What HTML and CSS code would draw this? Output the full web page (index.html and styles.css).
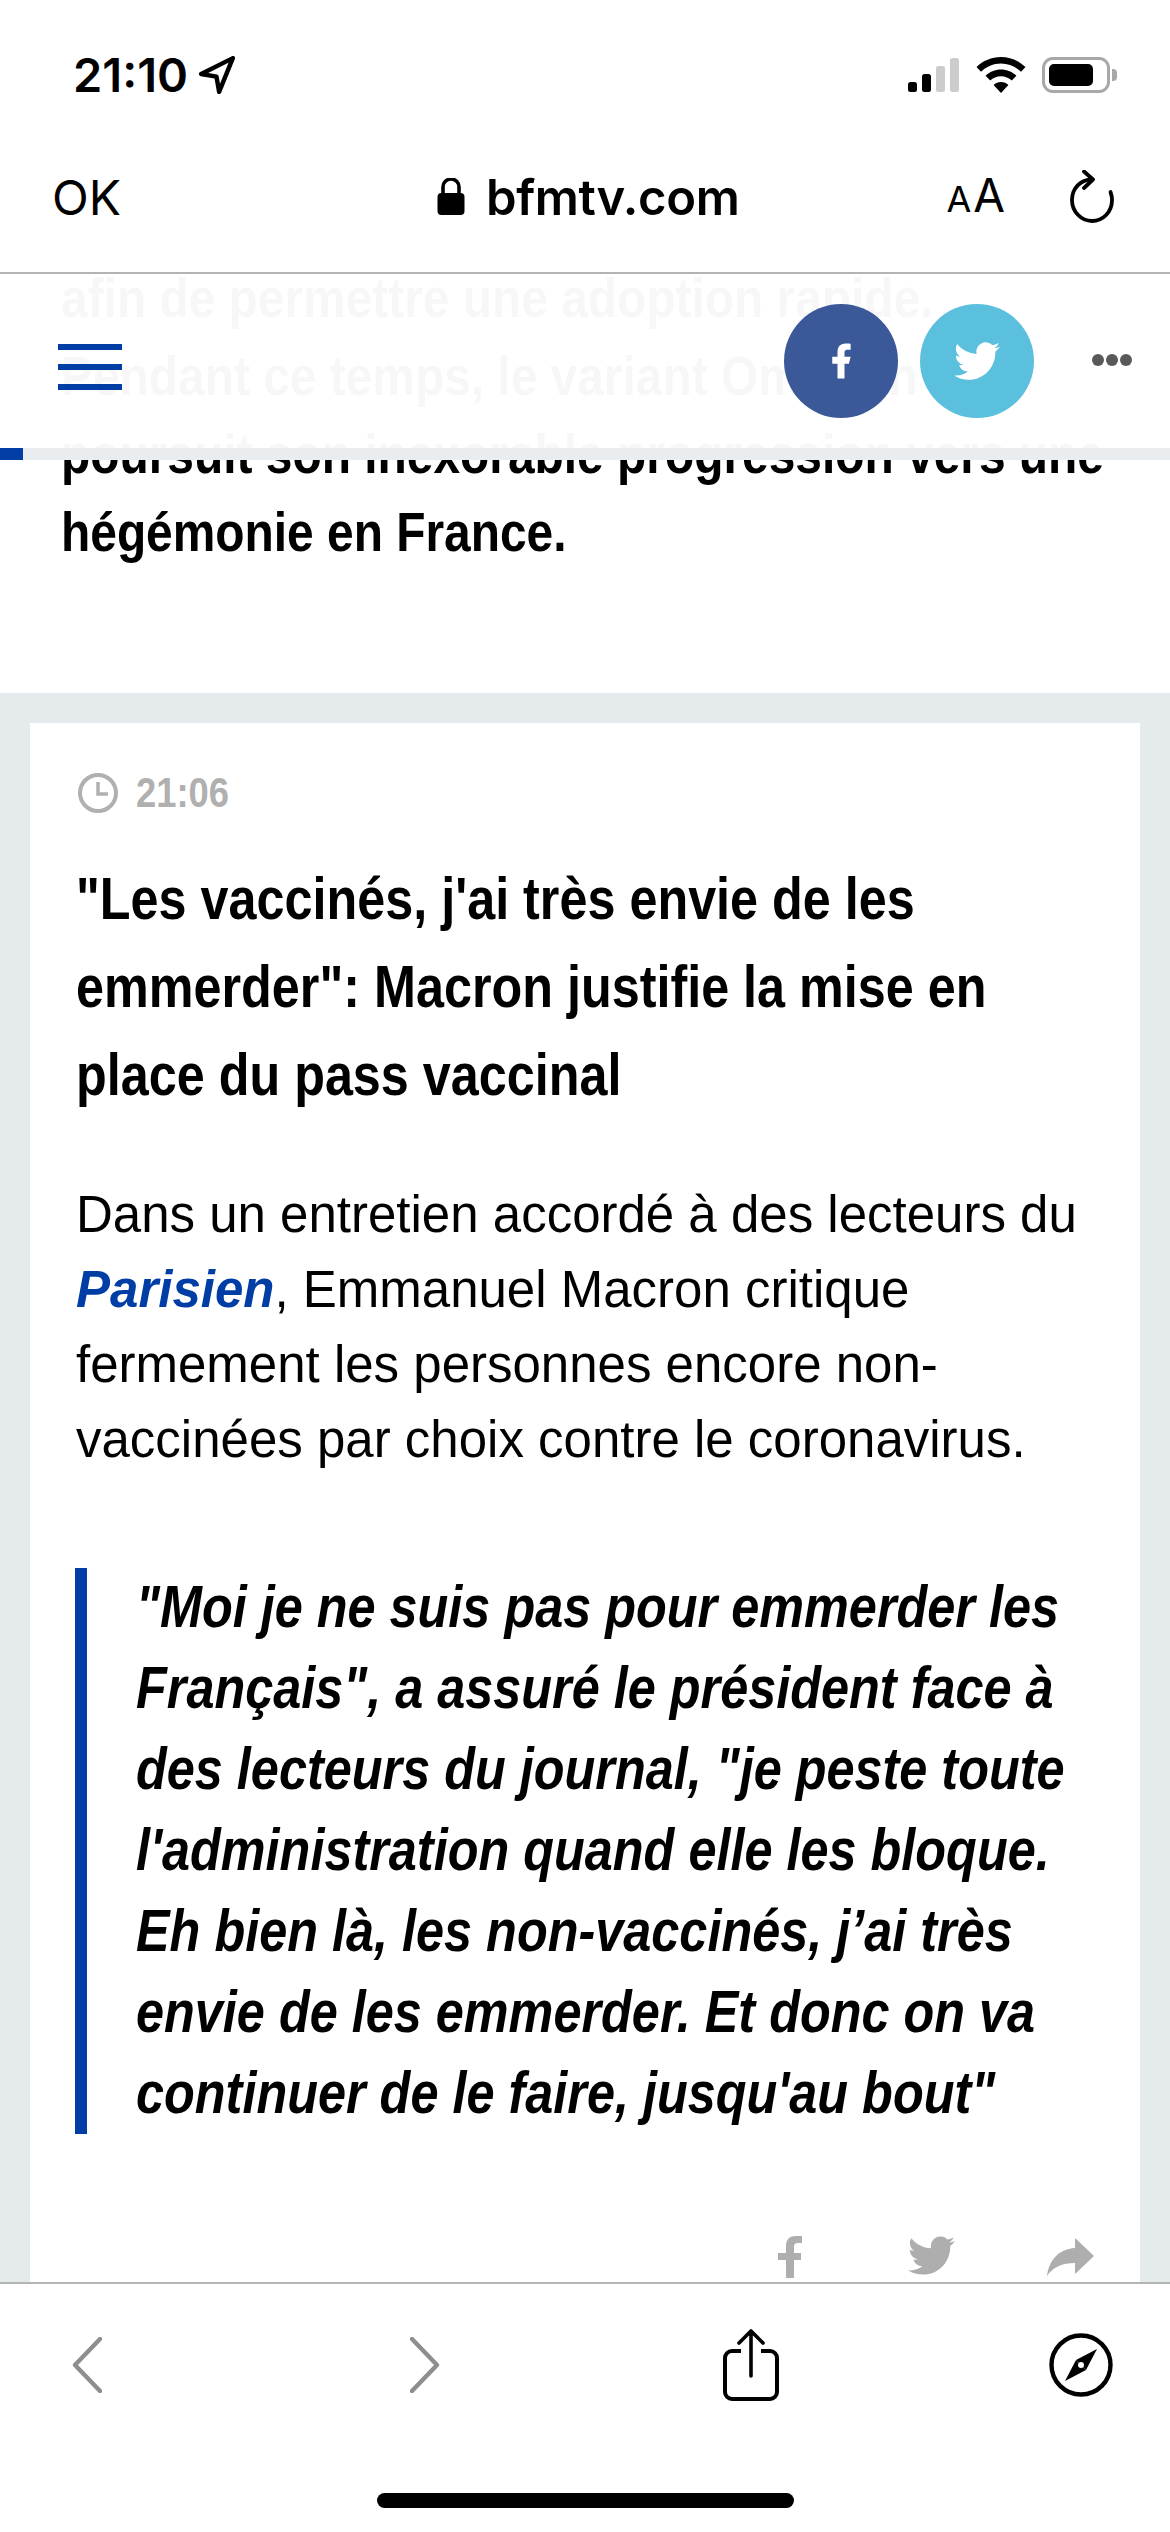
FILE: index.html

```html
<!DOCTYPE html>
<html lang="fr">
<head>
  <meta charset="UTF-8" />
  <meta name="viewport" content="width=device-width, initial-scale=1.0" />
  <title>bfmtv.com</title>
  <link rel="stylesheet" href="styles.css">
</head>
<body>
  <div class="status-bar">
    <div class="status-time">
      <span>21:10</span>
      <svg class="status-arrow" viewBox="0 0 36 36"><path d="M33 2 3 17l14.500 2.500L20 34z" fill="none" stroke="#000" stroke-width="4.200" stroke-linejoin="round"/></svg>
    </div>
    <div class="status-icons">
      <svg class="signal" viewBox="0 0 51 34">
        <rect x="0" y="24" width="9" height="10" rx="2.5" fill="#000"/>
        <rect x="14" y="16" width="9" height="18" rx="2.5" fill="#000"/>
        <rect x="28" y="8" width="9" height="26" rx="2.5" fill="#ccc"/>
        <rect x="42" y="0" width="9" height="34" rx="2.5" fill="#ccc"/>
      </svg>
      <svg class="wifi" viewBox="0 0 50 36">
        <path d="M25 0C15.500 0 7 3.800 0.500 10l4.500 4.800C10.300 9.800 17.300 6.600 25 6.600s14.700 3.200 20 8.200l4.500-4.800C43 3.800 34.500 0 25 0z" fill="#000"/>
        <path d="M25 12.500c-6 0-11.400 2.400-15.400 6.200l4.600 4.800c2.800-2.700 6.600-4.300 10.800-4.300s8 1.600 10.800 4.300l4.600-4.800C36.400 14.900 31 12.500 25 12.500z" fill="#000"/>
        <path d="M25 25c-2.900 0-5.500 1.100-7.400 3L25 36l7.400-8C30.500 26.100 27.900 25 25 25z" fill="#000"/>
      </svg>
      <div class="battery"><div class="battery-level"></div></div>
      <div class="battery-nub"></div>
    </div>
  </div>

  <div class="url-bar">
    <span class="url-ok">OK</span>
    <div class="url-address">
      <svg class="lock" viewBox="0 0 28 38"><path d="M6 16V9a8 8 0 0 1 16 0v7" fill="none" stroke="#000" stroke-width="3.600"/><rect x="0.500" y="15" width="27" height="22" rx="4" fill="#000"/></svg>
      <span>bfmtv.com</span>
    </div>
    <div class="url-tools">
      <span class="aa"><span class="aa-small">A</span>A</span>
      <svg class="reload" viewBox="0 0 46 54"><path d="M23 9.500C11.500 9.500 3 18.500 3 30s9 21 20 21 20-9 20-21c0-3-.6-5.500-1.500-8" fill="none" stroke="#000" stroke-width="3.800" stroke-linecap="round"/><path d="M15 1.500 24 9.500 15 18" fill="none" stroke="#000" stroke-width="3.800" stroke-linecap="round" stroke-linejoin="round"/></svg>
    </div>
  </div>

  <main class="viewport">
    <div class="site-head">
      <div class="head-row">
        <div class="burger"><i></i><i></i><i></i></div>
        <div class="head-share">
          <span class="round round-fb">
            <svg viewBox="0 0 24 24"><path d="M14 13.500h2.500l1-4H14v-2c0-1.030 0-2 2-2h1.500V2.140c-.326-.043-1.557-.14-2.857-.14C11.928 2 10 3.657 10 6.700v2.800H7v4h3V22h4z" fill="#fff"/></svg>
          </span>
          <span class="round round-tw">
            <svg viewBox="0 0 24 24"><path d="M23.953 4.570a10 10 0 01-2.825.775 4.958 4.958 0 002.163-2.723c-.951.555-2.005.959-3.127 1.184a4.920 4.920 0 00-8.384 4.482C7.690 8.095 4.067 6.130 1.640 3.162a4.822 4.822 0 00-.666 2.475c0 1.710.870 3.213 2.188 4.096a4.904 4.904 0 01-2.228-.616v.060a4.923 4.923 0 003.946 4.827 4.996 4.996 0 01-2.212.085 4.936 4.936 0 004.604 3.417 9.867 9.867 0 01-6.102 2.105c-.390 0-.779-.023-1.170-.067a13.995 13.995 0 007.557 2.209c9.053 0 13.998-7.496 13.998-13.985 0-.210 0-.420-.015-.630A9.935 9.935 0 0024 4.590z" fill="#fff"/></svg>
          </span>
          <span class="more"><i></i><i></i><i></i></span>
        </div>
      </div>
      <div class="progress"><div class="progress-fill"></div></div>
    </div>

    <div class="scrolled">
      <p class="lede">afin de permettre une adoption rapide.<br>Pendant ce temps, le variant Omicron<br>poursuit son inexorable progression vers une<br>hégémonie en France.</p>

      <section class="feed">
        <article class="card">
          <div class="card-time">
            <svg class="clock" viewBox="0 0 40 40"><circle cx="20" cy="20" r="18" fill="none" stroke="#b0b0b0" stroke-width="4"/><path d="M20 9v12h10" fill="none" stroke="#b0b0b0" stroke-width="3.500"/></svg>
            <span class="time-text">21:06</span>
          </div>
          <h2 class="card-title">"Les vaccinés, j'ai très envie de les<br>emmerder": Macron justifie la mise en<br>place du pass vaccinal</h2>
          <p class="card-text">Dans un entretien accordé à des lecteurs du<br><a class="source" href="#">Parisien</a>, Emmanuel Macron critique<br>fermement les personnes encore non-<br>vaccinées par choix contre le coronavirus.</p>
          <blockquote class="quote"><span class="quote-text">"Moi je ne suis pas pour emmerder les<br>Français", a assuré le président face à<br>des lecteurs du journal, "je peste toute<br>l'administration quand elle les bloque.<br>Eh bien là, les non-vaccinés, j’ai très<br>envie de les emmerder. Et donc on va<br>continuer de le faire, jusqu'au bout"</span></blockquote>
          <div class="card-share">
            <svg class="share-f" viewBox="0 0 24 42"><path d="M16 42V24h7v-7h-7v-6c0-2.500 1-4 4-4h4V0h-6C10 0 8 5 8 10v7H0v7h8v18z" fill="#aeaeae"/></svg>
            <svg class="share-t" viewBox="0 0 24 24"><path d="M23.953 4.570a10 10 0 01-2.825.775 4.958 4.958 0 002.163-2.723c-.951.555-2.005.959-3.127 1.184a4.920 4.920 0 00-8.384 4.482C7.690 8.095 4.067 6.130 1.640 3.162a4.822 4.822 0 00-.666 2.475c0 1.710.870 3.213 2.188 4.096a4.904 4.904 0 01-2.228-.616v.060a4.923 4.923 0 003.946 4.827 4.996 4.996 0 01-2.212.085 4.936 4.936 0 004.604 3.417 9.867 9.867 0 01-6.102 2.105c-.390 0-.779-.023-1.170-.067a13.995 13.995 0 007.557 2.209c9.053 0 13.998-7.496 13.998-13.985 0-.210 0-.420-.015-.630A9.935 9.935 0 0024 4.590z" fill="#aeaeae"/></svg>
            <svg class="share-a" viewBox="0 0 47 38"><path d="M28 0l19 18-19 18V25C15 25 6 29 0 38 2 23 11 11 28 10z" fill="#aeaeae"/></svg>
          </div>
        </article>
      </section>
    </div>
  </main>

  <div class="bottom-bar">
    <div class="bottom-icons">
      <svg class="chev" viewBox="0 0 30 56"><path d="M28 2 3 28l25 26" fill="none" stroke="#8e8e8e" stroke-width="4.400" stroke-linecap="round" stroke-linejoin="round"/></svg>
      <svg class="chev chev-next" viewBox="0 0 30 56"><path d="M2 2l25 26L2 54" fill="none" stroke="#8e8e8e" stroke-width="4.400" stroke-linecap="round" stroke-linejoin="round"/></svg>
      <svg class="share" viewBox="0 0 56 72"><path d="M18 22H9a7 7 0 0 0-7 7v34a7 7 0 0 0 7 7h38a7 7 0 0 0 7-7V29a7 7 0 0 0-7-7h-9" fill="none" stroke="#000" stroke-width="4"/><path d="M28 47V2M16 14 28 2l12 12" fill="none" stroke="#000" stroke-width="3.600" stroke-linecap="round" stroke-linejoin="round"/></svg>
      <svg class="compass" viewBox="0 0 64 64"><circle cx="32" cy="32" r="29.500" fill="none" stroke="#000" stroke-width="4.400"/><path d="M48 16 37 37 27 27z" fill="#000"/><path d="M16 48 27 27 37 37z" fill="#000"/><circle cx="32" cy="32" r="3" fill="#fff"/></svg>
    </div>
    <div class="home-indicator"></div>
  </div>
</body>
</html>
```

FILE: styles.css

```css
* {
  box-sizing: border-box;
}
html, body {
  margin: 0;
  padding: 0;
}
body {
  width: 1170px;
  height: 2532px;
  overflow: hidden;
  display: flex;
  flex-direction: column;
  background: #fff;
  color: #000;
  font-family: 'Liberation Sans', Arial, sans-serif;
}

/* phone status bar */
.status-bar {
  height: 113px;
  padding: 52px 53px 0 73px;
  display: flex;
  justify-content: space-between;
  align-items: flex-start;
}
.status-time {
  display: flex;
  align-items: center;
  gap: 10px;
  font-family: Inter, sans-serif;
  font-size: 47px;
  font-weight: 600;
  line-height: 46px;
}
.status-arrow {
  width: 38px;
  height: 38px;
}
.status-icons {
  display: flex;
  align-items: center;
  height: 46px;
}
.signal {
  width: 51px;
  height: 34px;
  margin-right: 17px;
}
.wifi {
  width: 50px;
  height: 36px;
  margin-right: 16px;
}
.battery {
  width: 68px;
  height: 36px;
  border: 3px solid #a8a8a8;
  border-radius: 11px;
  padding: 4px;
}
.battery-level {
  width: 44px;
  height: 100%;
  background: #000;
  border-radius: 5px;
}
.battery-nub {
  width: 5px;
  height: 12px;
  margin-left: 2px;
  background: #a8a8a8;
  border-radius: 0 4px 4px 0;
}

/* safari top bar */
.url-bar {
  height: 161px;
  padding: 9px 55px 0 52px;
  display: flex;
  align-items: center;
  position: relative;
  border-bottom: 2px solid #b4b4b4;
  background: #fff;
  font-size: 48px;
  font-family: Inter, sans-serif;
}
.url-ok {
  font-weight: 400;
  width: 385px;
}
.url-address {
  display: flex;
  align-items: center;
  gap: 21px;
  font-size: 49px;
  font-weight: 600;
  letter-spacing: -0.4px;
}
.lock {
  width: 28px;
  height: 38px;
}
.url-tools {
  margin-left: auto;
  display: flex;
  align-items: center;
  gap: 64px;
}
.aa {
  font-size: 46px;
  line-height: 46px;
}
.aa-small {
  font-size: 36px;
  margin-right: 2px;
}
.reload {
  width: 46px;
  height: 54px;
}

/* scrolled web page */
.viewport {
  height: 2008px;
  position: relative;
  overflow: hidden;
}
.scrolled {
  margin-top: -15px;
}
.site-head {
  position: absolute;
  top: 0;
  left: 0;
  right: 0;
  z-index: 2;
}
.head-row {
  height: 174px;
  padding: 30px 38px 0 58px;
  display: flex;
  justify-content: space-between;
  align-items: flex-start;
  background: rgba(255, 255, 255, 0.97);
}
.burger {
  margin-top: 40px;
  width: 64px;
  display: flex;
  flex-direction: column;
  gap: 14px;
}
.burger i {
  display: block;
  height: 6px;
  background: #003da5;
}
.head-share {
  display: flex;
  align-items: flex-start;
  gap: 22px;
}
.round {
  width: 114px;
  height: 114px;
  border-radius: 50%;
  display: flex;
  align-items: center;
  justify-content: center;
}
.round-fb {
  background: #3b5998;
}
.round-fb svg {
  width: 42px;
  height: 42px;
}
.round-tw {
  background: #5bc0de;
}
.round-tw svg {
  width: 46px;
  height: 46px;
}
.more {
  margin: 50px 0 0 36px;
  display: flex;
  gap: 2px;
}
.more i {
  display: block;
  width: 12px;
  height: 12px;
  border-radius: 50%;
  background: #58595b;
}
.progress {
  height: 12px;
  background: #e9edf0;
}
.progress-fill {
  width: 23px;
  height: 100%;
  background: #003da5;
}

/* the site's condensed face is not installed, so the bold text is squeezed */
.lede {
  margin: 0 0 0 61px;
  height: 434px;
  font-size: 56px;
  font-weight: 700;
  line-height: 78px;
  white-space: nowrap;
  transform: scaleX(0.855);
  transform-origin: left top;
}
.feed {
  background: #e5eaed;
  padding: 30px 30px 0;
}
.card {
  background: #fff;
  padding: 46px 46px 0;
  height: 1600px;
}
.card-time {
  display: flex;
  align-items: center;
  gap: 18px;
  height: 48px;
  padding-left: 2px;
  color: #b0b0b0;
  font-size: 42px;
  font-weight: 700;
}
.time-text {
  display: block;
  transform: scaleX(0.865);
  transform-origin: left center;
}
.clock {
  width: 40px;
  height: 40px;
}
.card-title {
  margin: 38px 0 0;
  font-size: 59px;
  font-weight: 700;
  line-height: 88px;
  white-space: nowrap;
  transform: scaleX(0.853);
  transform-origin: left top;
}
.card-text {
  margin: 58px 0 0;
  font-size: 51px;
  line-height: 75px;
  white-space: nowrap;
}
.source {
  color: #003da5;
  font-weight: 700;
  font-style: italic;
  text-decoration: none;
}
.quote {
  display: flow-root;
  margin: 91px 0 0 -1px;
  padding-left: 49px;
  border-left: 12px solid #003da5;
  height: 566px;
  font-size: 60px;
  font-style: italic;
  font-weight: 700;
  line-height: 81px;
}
.quote-text {
  display: block;
  margin-top: -2px;
  white-space: nowrap;
  transform: scaleX(0.84);
  transform-origin: left top;
}
.card-share {
  margin-top: 102px;
  display: flex;
  justify-content: flex-end;
  align-items: flex-start;
}
.share-f {
  width: 24px;
  height: 42px;
  margin-right: 106px;
}
.share-t {
  width: 47px;
  height: 47px;
  margin: -4px 92px 0 0;
}
.share-a {
  width: 47px;
  height: 38px;
  margin-top: 2px;
}

/* safari bottom bar */
.bottom-bar {
  flex: 1;
  border-top: 2px solid #b4b4b4;
  background: #fff;
  position: relative;
}
.bottom-icons {
  height: 180px;
  padding: 0 57px 18px 72px;
  display: flex;
  align-items: center;
}
.chev {
  width: 30px;
  height: 56px;
  margin-right: 308px;
}
.chev-next {
  margin-right: 283px;
}
.share {
  width: 56px;
  height: 72px;
}
.compass {
  width: 64px;
  height: 64px;
  margin-left: auto;
}
.home-indicator {
  position: absolute;
  left: 377px;
  bottom: 24px;
  width: 417px;
  height: 15px;
  border-radius: 8px;
  background: #000;
}
```
